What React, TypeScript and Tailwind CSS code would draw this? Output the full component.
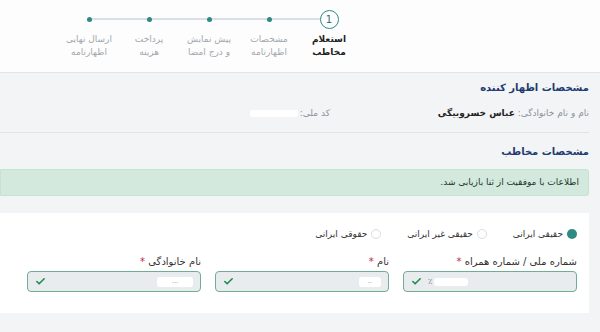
import { Check } from 'lucide-react';

const steps = [
  { a: 'استعلام', b: 'مخاطب', active: true },
  { a: 'مشخصات', b: 'اظهارنامه' },
  { a: 'پیش نمایش', b: 'و درج امضا' },
  { a: 'پرداخت', b: 'هزینه' },
  { a: 'ارسال نهایی', b: 'اظهارنامه' },
];

function Field({ label, ltr, children }: { label: string; ltr?: boolean; children?: React.ReactNode }) {
  return (
    <div className="w-[174px]">
      <div className="text-[10px] leading-[14px] text-[#333] mb-[2px]">
        {label} <span className="text-[#c0264b]">*</span>
      </div>
      {ltr ? (
        <div dir="ltr" className="h-[21px] rounded-[4px] border border-[#6fae94] bg-[#e9ecef] flex items-center gap-[6px] px-[7px]">
          <Check size={11} strokeWidth={3.5} className="text-[#1d8a4e]" />
          {children}
        </div>
      ) : (
        <div className="h-[21px] rounded-[4px] border border-[#6fae94] bg-[#e9ecef] flex items-center px-[7px] justify-between">
          <div className="flex items-center">{children}</div>
          <Check size={11} strokeWidth={3.5} className="text-[#1d8a4e]" />
        </div>
      )}
    </div>
  );
}

export default function App() {
  return (
    <div dir="rtl" className="w-[600px] h-[332px] overflow-hidden bg-[#f3f4f6] font-['DejaVu_Sans',sans-serif]">
      <header className="h-[73px] bg-[#fdfdfd] border-b border-[#e3e5e8] pr-[241px] flex">
        <div className="relative flex">
          <div className="absolute top-[18px] right-[30px] left-[29px] h-[2px] bg-[#d9dfe4]" />
          {steps.map((s, i) => (
            <div key={i} className="relative w-[60px] flex flex-col items-center pt-[10px]">
              <div className="h-[18px] flex items-center justify-center">
                {s.active ? (
                  <div className="w-[19px] h-[19px] rounded-full border-[1.5px] border-[#2e8b84] bg-[#fdfdfd] flex items-center justify-center text-[10px] text-[#2e6f6a]">
                    1
                  </div>
                ) : (
                  <div className="w-[5px] h-[5px] rounded-full bg-[#2e8b84]" />
                )}
              </div>
              <div
                className={
                  'mt-[5px] text-center text-[9px] leading-[13px] whitespace-nowrap ' +
                  (s.active ? 'font-bold text-[#222]' : 'text-[#a3a7ad]')
                }
              >
                <div>{s.a}</div>
                <div>{s.b}</div>
              </div>
            </div>
          ))}
        </div>
      </header>

      <main className="pr-[11px]">
        <div className="pt-[8px] text-[10px] leading-[14px] font-bold text-[#1f3b70]">مشخصات اظهار کننده</div>
        <div className="mt-[11px] flex text-[9px] leading-[14px]">
          <div className="w-[259px]">
            <span className="text-[#8e939a]">نام و نام خانوادگی: </span>
            <span className="font-bold text-[#222]">عباس خسروبیگی</span>
          </div>
          <div className="flex items-center">
            <span className="text-[#8e939a]">کد ملی: </span>
            <span className="inline-block w-[48px] h-[7px] bg-white rounded-[2px] mr-[2px]" />
          </div>
        </div>
        <div className="mt-[12px] border-b border-[#e1e3e6]" />

        <div className="mt-[12px] text-[10px] leading-[14px] font-bold text-[#1f3b70]">مشخصات مخاطب</div>
        <div className="mt-[10px] h-[27px] bg-[#d4e9de] border border-[#c6e2d2] rounded-r-[3px] flex items-center pr-[9px] text-[9px] text-[#22372b]">
          اطلاعات با موفقیت از ثنا بازیابی شد.
        </div>

        <div className="mt-[17px] h-[100px] bg-white pr-[12px] pt-[15px]">
          <div className="flex gap-[26px] text-[9px] leading-[12px] text-[#333]">
            <label className="flex items-center gap-[4px]">
              <span className="w-[10px] h-[10px] rounded-full bg-[#2e8b84]" />
              حقیقی ایرانی
            </label>
            <label className="flex items-center gap-[4px]">
              <span className="w-[10px] h-[10px] rounded-full border border-[#dadde1]" />
              حقیقی غیر ایرانی
            </label>
            <label className="flex items-center gap-[4px]">
              <span className="w-[10px] h-[10px] rounded-full border border-[#dadde1]" />
              حقوقی ایرانی
            </label>
          </div>

          <div className="mt-[15px] flex gap-[14px]">
            <Field label="شماره ملی / شماره همراه" ltr>
              <span className="text-[8px] text-[#777] leading-none">٪</span>
              <span className="inline-block w-[34px] h-[8px] bg-white rounded-[3px] -ml-[4px]" />
            </Field>
            <Field label="نام">
              <span className="inline-flex items-center justify-center w-[22px] h-[10px] bg-white rounded-[3px] text-[7px] text-[#999]">..</span>
            </Field>
            <Field label="نام خانوادگی">
              <span className="inline-flex items-center justify-center w-[36px] h-[10px] bg-white rounded-[3px] text-[7px] text-[#999]">...</span>
            </Field>
          </div>
        </div>
      </main>
    </div>
  );
}
